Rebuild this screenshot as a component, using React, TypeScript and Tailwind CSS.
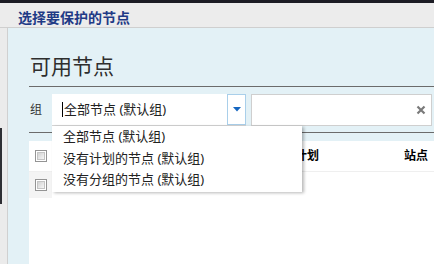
import React from "react";

function Checkbox() {
  return (
    <div className="w-[12px] h-[12px] border border-[#949494] bg-white p-[1px]">
      <div className="w-full h-full border border-[#c4c4c4] bg-gradient-to-br from-[#d2d2d2] to-[#f6f6f6]" />
    </div>
  );
}

export default function App() {
  const font = { fontFamily: "'Noto Sans', 'Noto Sans CJK SC', sans-serif" };
  return (
    <div
      className="w-[434px] h-[264px] overflow-hidden flex flex-col bg-[#ececec]"
      style={font}
    >
      <div className="h-[3px] bg-[#1c1c24] shrink-0" />
      <div className="h-[25px] shrink-0 border-b border-[#cfcfcf] pl-[18px] pt-[7px]">
        <div className="text-[14px] leading-[16px] font-bold text-[#1f3a86]">
          选择要保护的节点
        </div>
      </div>
      <div className="flex flex-1 min-h-0">
        <div className="w-[8px] shrink-0 bg-[#ebebeb] border-r border-[#d0d0d0] flex flex-col">
          <div className="mt-[100px] h-[76px] w-[2px] bg-[#2e2e33]" />
        </div>
        <div className="flex-1 min-w-0 bg-[#e3f1f6] pl-[21px] flex flex-col">
          <div className="h-[59px] shrink-0 border-b border-[#6b6b6b] pt-[24px]">
            <div className="text-[21px] leading-[28px] text-[#2e2e2e] pl-[1px]">
              可用节点
            </div>
          </div>
          <div className="mt-[7px] h-[32px] shrink-0 flex items-stretch">
            <div className="w-[23px] flex items-center pl-[1px] text-[12px] text-[#333]">
              组
            </div>
            <div className="relative w-[194px] flex bg-white border-b border-[#d6d6d6]">
              <div className="flex-1 flex items-center pl-[10px] text-[13px] text-[#222]">
                <span className="w-px h-[15px] bg-black mr-[1px]" />
                全部节点 (默认组)
              </div>
              <div className="w-[19px] border border-[#a9cfea] flex items-center justify-center">
                <svg width="8" height="5" viewBox="0 0 8 5">
                  <polygon points="0,0 8,0 4,4.5" fill="#1566c0" />
                </svg>
              </div>
              <div className="absolute left-0 top-full mt-[1px] w-[250px] h-[66px] bg-white shadow-[2px_1px_3px_rgba(0,0,0,0.28)] z-10 pl-[11px] text-[13px] text-[#222]">
                <div className="leading-[21.5px]">全部节点 (默认组)</div>
                <div className="leading-[21.5px]">没有计划的节点 (默认组)</div>
                <div className="leading-[21.5px]">没有分组的节点 (默认组)</div>
              </div>
            </div>
            <div className="ml-[5px] mr-[2px] flex-1 bg-white border border-[#cfcfcf] flex items-center justify-end pr-[5px]">
              <svg width="10" height="10" viewBox="0 0 10 10">
                <path d="M1.5 1.5 L8.5 8.5 M8.5 1.5 L1.5 8.5" stroke="#7a7a7a" strokeWidth="2.2" />
              </svg>
            </div>
          </div>
          <div className="mt-[6px] h-px shrink-0 bg-[#6b6b6b]" />
          <div className="mt-[8px] flex-1 bg-white flex flex-col">
            <div className="h-[31px] flex items-center border-b border-[#efefef]">
              <div className="w-[23px] flex justify-center pl-[1px]">
                <Checkbox />
              </div>
              <div className="w-[243px]" />
              <div className="w-[109px] text-[12px] font-bold text-black">计划</div>
              <div className="text-[12px] font-bold text-black">站点</div>
            </div>
            <div className="h-[26px] flex items-center">
              <div className="w-[23px] h-full flex items-center justify-center pl-[1px] bg-[#f4f4f4]">
                <Checkbox />
              </div>
            </div>
          </div>
        </div>
      </div>
    </div>
  );
}
